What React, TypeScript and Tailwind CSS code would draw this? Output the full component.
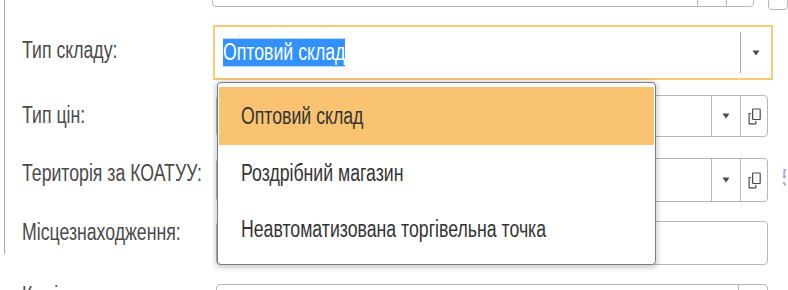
import React from 'react'

// Tall narrow text, as in the reference
function T({ children, className = '' }: { children: React.ReactNode; className?: string }) {
  return <span className={`inline-block scale-y-[1.32] whitespace-nowrap ${className}`}>{children}</span>
}

function Arrow() {
  return (
    <svg width="8" height="6" viewBox="0 0 8 6">
      <path d="M0.5 0.5H7.5L4 5.5Z" fill="#4a4a4a" />
    </svg>
  )
}

function CopyIcon() {
  return (
    <svg width="13" height="17" viewBox="0 0 13 17" fill="none" stroke="#4a4a4a" strokeWidth="1.2">
      <rect x="4.6" y="1" width="7.6" height="10.5" rx="0.5" />
      <path d="M3 5.5H1.1V15.8H7.8V13" />
    </svg>
  )
}

function Cell({ children, last }: { children?: React.ReactNode; last?: boolean }) {
  return (
    <div className={`flex items-center justify-center border-l border-[#b8b8b8] ${last ? 'w-[27px]' : 'w-[29px]'}`}>
      {children}
    </div>
  )
}

function Field({ h, arrow, copy }: { h: string; arrow?: boolean; copy?: boolean }) {
  return (
    <div className={`flex w-[552px] ${h} rounded-[4px] border border-[#b8b8b8] bg-white`}>
      <div className="flex-1" />
      {arrow && (
        <Cell>
          <Arrow />
        </Cell>
      )}
      {copy && (
        <Cell last>
          <CopyIcon />
        </Cell>
      )}
    </div>
  )
}

const items = ['Оптовий склад', 'Роздрібний магазин', 'Неавтоматизована торгівельна точка']

export default function App() {
  return (
    <div className="relative h-[290px] w-[788px] overflow-hidden bg-white font-['Liberation_Sans',Arial,sans-serif] text-[17.7px] leading-[20px]">
      <div className="ml-[4px] h-full border-l border-[#a8a8a8]">
        <div className="-mt-[36px] flex flex-col">
          {/* partial row above */}
          <div className="flex h-[61px] items-start">
            <div className="w-[211px]" />
            <Field h="h-[43px]" arrow copy />
            <div className="ml-[14px] h-[46px] w-[20px] rounded-[4px] border border-[#b8b8b8]" />
          </div>

          {/* focused row */}
          <div className="flex h-[70px] items-start">
            <div className="w-[208px] pl-[17px] pt-[15px] text-[#4a4a4a]">
              <T>Тип складу:</T>
            </div>
            <div className="flex h-[55px] w-[560px] items-center border-2 border-[#fcc878] bg-white">
              <div className="flex flex-1 items-center pl-[8px]">
                <span className="inline-block scale-y-[1.32] whitespace-nowrap bg-[#3390ff] leading-[21px] text-white">
                  Оптовий склад
                </span>
              </div>
              <div className="h-[41px] w-px bg-[#a8a8a8]" />
              <div className="flex w-[30px] items-center justify-center">
                <Arrow />
              </div>
            </div>
          </div>

          <div className="flex h-[63px] items-start">
            <div className="w-[211px] pl-[17px] pt-[10px] text-[#4a4a4a]">
              <T>Тип цін:</T>
            </div>
            <Field h="h-[42px]" arrow copy />
          </div>

          <div className="flex h-[63px] items-start">
            <div className="w-[211px] pl-[17px] pt-[5px] text-[#4a4a4a]">
              <T>Територія за КОАТУУ:</T>
            </div>
            <Field h="h-[44px]" arrow copy />
            <div className="ml-[14px] w-[4px] overflow-hidden pt-[10px] text-[#a0a0f0]">
              <T>5</T>
            </div>
          </div>

          <div className="flex h-[63px] items-start">
            <div className="w-[211px] pl-[17px] pt-[1px] text-[#4a4a4a]">
              <T>Місцезнаходження:</T>
            </div>
            <Field h="h-[44px]" />
          </div>

          <div className="flex h-[50px] items-start">
            <div className="w-[211px] pl-[17px] pt-[1px] text-[#4a4a4a]">
              <T>Комірник:</T>
            </div>
            <Field h="h-[43px]" arrow />
          </div>
        </div>
      </div>

      {/* dropdown list */}
      <div className="absolute left-[217px] top-[82px] h-[183px] w-[439px] rounded-[4px] border border-[#7c7c7c] bg-white px-[1px] pt-[4px] shadow-[0_1px_5px_2px_rgba(0,0,0,0.18)]">
        {items.map((t, i) => (
          <div
            key={t}
            className={`flex items-center pl-[22px] text-[#333] ${i === 0 ? 'h-[58px] bg-[#f9c372]' : 'h-[56px]'}`}
          >
            <T>{t}</T>
          </div>
        ))}
      </div>
    </div>
  )
}
